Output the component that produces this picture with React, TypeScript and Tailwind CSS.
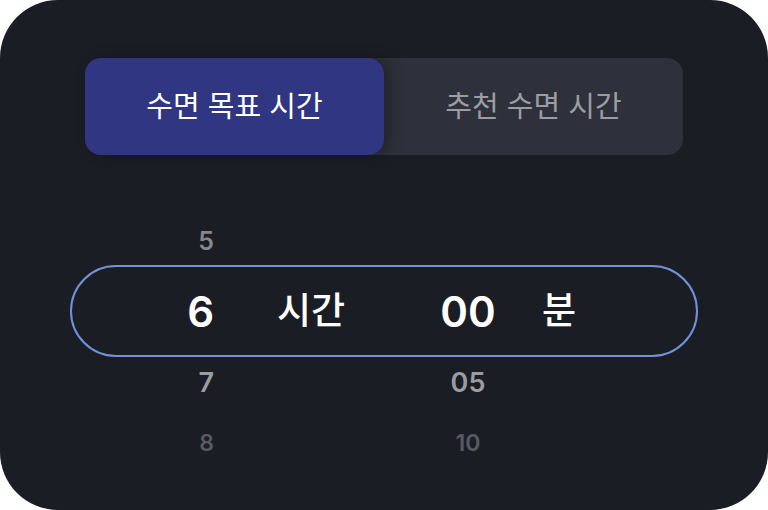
import React from "react";

const font = { fontFamily: 'Inter, "Noto Sans CJK KR", sans-serif' };

type Row = {
  hour: string;
  min: string;
  selected?: boolean;
  h: string;
  size: string;
  color: string;
};

const rows: Row[] = [
  { hour: "5", min: "", h: "h-[46px]", size: "text-[25px]", color: "text-[#85878c]" },
  { hour: "6", min: "00", selected: true, h: "h-[92px]", size: "text-[42px]", color: "text-white" },
  { hour: "7", min: "05", h: "h-[52px]", size: "text-[27px]", color: "text-[#9a9ca1]" },
  { hour: "8", min: "10", h: "h-[68px]", size: "text-[23px]", color: "text-[#575a60]" },
];

export default function App() {
  return (
    <div className="w-[768px] h-[510px] bg-white" style={font}>
      <div className="w-full h-full rounded-[58px] bg-[#1b1d24] flex flex-col items-center overflow-hidden">
        {/* 탭 */}
        <div className="mt-[58px] w-[598px] h-[97px] rounded-2xl bg-[#2e313b] flex">
          <button className="w-[299px] h-full rounded-2xl bg-[#303682] text-white text-[29px] font-normal shadow-[6px_0_14px_rgba(0,0,0,0.28)]">
            수면 목표 시간
          </button>
          <button className="flex-1 h-full text-[#9b9da3] text-[29px] font-normal">
            추천 수면 시간
          </button>
        </div>

        {/* 피커 */}
        <div className="mt-[64px] w-[628px] flex flex-col">
          {rows.map((r) => (
            <div
              key={r.hour}
              className={`${r.h} flex items-center border-2 rounded-full ${
                r.selected ? "border-[#7391d8]" : "border-transparent"
              }`}
            >
              <span className={`ml-[62px] w-20 text-right font-semibold ${r.size} ${r.color}`}>
                {r.hour}
              </span>
              <span className="ml-[57px] w-20 text-center text-[37px] font-medium text-white">
                {r.selected ? "시간" : ""}
              </span>
              <span className={`ml-[77px] w-20 text-center font-semibold ${r.size} ${r.color}`}>
                {r.min}
              </span>
              <span className="ml-[11px] w-20 text-center text-[37px] font-medium text-white">
                {r.selected ? "분" : ""}
              </span>
            </div>
          ))}
        </div>
      </div>
    </div>
  );
}
